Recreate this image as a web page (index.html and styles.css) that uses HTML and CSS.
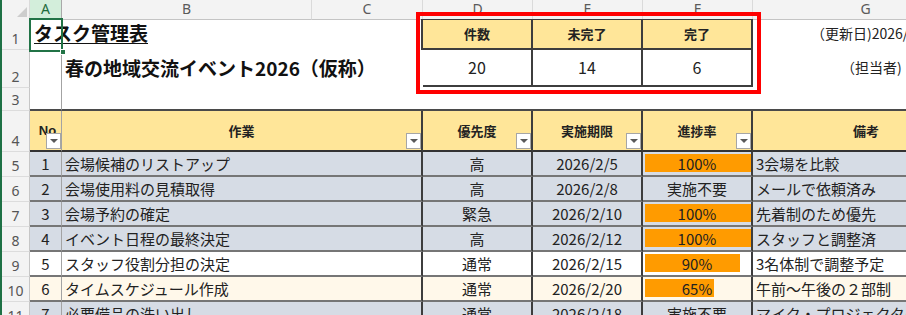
FILE: index.html
```html
<!DOCTYPE html>
<html lang="ja">
<head>
<meta charset="utf-8">
<link rel="stylesheet" href="styles.css">
</head>
<body>
<div class="sheet">
  <div class="row colhdr">
    <div class="corner"><span class="tri"></span></div>
    <div class="sel">A</div><div>B</div><div>C</div><div>D</div><div>E</div><div>F</div><div>G</div>
  </div>

  <div class="row r1">
    <div class="rh">1</div>
    <div class="ca"><span class="title">タスク管理表</span></div>
    <div></div>
    <div class="cc"></div>
    <div class="sh">件数</div><div class="sh">未完了</div><div class="sh">完了</div>
    <div class="meta m1">（更新日)2026/2/1</div>
  </div>

  <div class="row r2">
    <div class="rh">2</div>
    <div class="ca"></div>
    <div class="sub span2">春の地域交流イベント2026（仮称）</div>
    <div class="sv">20</div><div class="sv">14</div><div class="sv">6</div>
    <div class="meta m2">（担当者)</div>
  </div>

  <div class="row r3">
    <div class="rh">3</div>
    <div class="ca"></div><div></div><div></div><div></div><div></div><div></div><div></div>
  </div>

  <div class="row r4 th">
    <div class="rh">4</div>
    <div class="ca no">No<span class="fb"><span class="arr"></span></span></div>
    <div class="span2 tb">作業<span class="fb"><span class="arr"></span></span></div>
    <div class="tb">優先度<span class="fb"><span class="arr"></span></span></div>
    <div class="tb">実施期限<span class="fb"><span class="arr"></span></span></div>
    <div class="tb">進捗率<span class="fb"><span class="arr"></span></span></div>
    <div class="last">備考</div>
  </div>

  <div class="row td gray">
    <div class="rh">5</div>
    <div class="ca num">1</div>
    <div class="span2 tb task">会場候補のリストアップ</div>
    <div class="tb ctr">高</div>
    <div class="tb ctr">2026/2/5</div>
    <div class="tb prog"><div class="bar" style="--p:1"></div><div class="pv">100%</div></div>
    <div class="last note">3会場を比較</div>
  </div>

  <div class="row td gray">
    <div class="rh">6</div>
    <div class="ca num">2</div>
    <div class="span2 tb task">会場使用料の見積取得</div>
    <div class="tb ctr">高</div>
    <div class="tb ctr">2026/2/8</div>
    <div class="tb prog"><div class="pv">実施不要</div></div>
    <div class="last note">メールで依頼済み</div>
  </div>

  <div class="row td gray">
    <div class="rh">7</div>
    <div class="ca num">3</div>
    <div class="span2 tb task">会場予約の確定</div>
    <div class="tb ctr">緊急</div>
    <div class="tb ctr">2026/2/10</div>
    <div class="tb prog"><div class="bar" style="--p:1"></div><div class="pv">100%</div></div>
    <div class="last note">先着制のため優先</div>
  </div>

  <div class="row td gray">
    <div class="rh">8</div>
    <div class="ca num">4</div>
    <div class="span2 tb task">イベント日程の最終決定</div>
    <div class="tb ctr">高</div>
    <div class="tb ctr">2026/2/12</div>
    <div class="tb prog"><div class="bar" style="--p:1"></div><div class="pv">100%</div></div>
    <div class="last note">スタッフと調整済</div>
  </div>

  <div class="row td white">
    <div class="rh">9</div>
    <div class="ca num">5</div>
    <div class="span2 tb task">スタッフ役割分担の決定</div>
    <div class="tb ctr">通常</div>
    <div class="tb ctr">2026/2/15</div>
    <div class="tb prog"><div class="bar" style="--p:0.9"></div><div class="pv">90%</div></div>
    <div class="last note">3名体制で調整予定</div>
  </div>

  <div class="row td cream">
    <div class="rh">10</div>
    <div class="ca num">6</div>
    <div class="span2 tb task">タイムスケジュール作成</div>
    <div class="tb ctr">通常</div>
    <div class="tb ctr">2026/2/20</div>
    <div class="tb prog"><div class="bar" style="--p:0.65"></div><div class="pv">65%</div></div>
    <div class="last note">午前～午後の２部制</div>
  </div>

  <div class="row td gray">
    <div class="rh">11</div>
    <div class="ca num">7</div>
    <div class="span2 tb task">必要備品の洗い出し</div>
    <div class="tb ctr">通常</div>
    <div class="tb ctr">2026/2/18</div>
    <div class="tb prog"><div class="pv">実施不要</div></div>
    <div class="last note">マイク・プロジェクター</div>
  </div>

  <div class="selbox"><span class="handle"></span></div>
  <div class="redbox"></div>
</div>
</body>
</html>
```

FILE: styles.css
```css
* { box-sizing: border-box; margin: 0; padding: 0; }

body {
  width: 906px;
  height: 315px;
  overflow: hidden;
  background: #fff;
  font-family: "Noto Sans CJK JP", "Noto Sans", sans-serif;
  color: #1f1f1f;
}

.sheet {
  position: relative;
  height: 315px;
  border-left: 2px solid #1e7145;
}

.row {
  display: grid;
  grid-template-columns: 28px 32px 250px 111px 110px 110px 110px 226px;
}

.row > div { min-width: 0; white-space: nowrap; }

.span2 { grid-column: span 2; }

/* column header */
.colhdr { height: 19px; background: #f3f3f3; }
.colhdr > div {
  border-bottom: 1px solid #c4c4c4;
  border-right: 1px solid #dadada;
  font: 14px "Noto Sans", sans-serif;
  color: #5a5a5a;
  text-align: center;
  line-height: 18px;
}
.colhdr .sel {
  background: #d3eedb;
  color: #1e6b3b;
  border-bottom: 2px solid #217346;
  border-right: 1px solid #a9a9a9;
}
.corner {
  display: flex;
  justify-content: flex-end;
  align-items: flex-end;
  padding: 0 2px 2px 0;
}
.tri {
  width: 0; height: 0;
  border-left: 10px solid transparent;
  border-bottom: 10px solid #cdcdcd;
}

/* row headers */
.rh {
  background: #f3f3f3;
  border-right: 1px solid #c6c6c6;
  border-bottom: 1px solid #dcdcdc;
  display: flex;
  justify-content: center;
  align-items: flex-end;
  padding-bottom: 1px;
  font: 14px "Noto Sans", sans-serif;
  color: #555;
  line-height: 18px;
}

/* freeze line after column A */
.ca { border-right: 1px solid #a3a3a3; }

.r1 { height: 31px; }
.r2 { height: 38px; }
.r3 { height: 23px; }
.r4 { height: 41px; }
.td { height: 25px; }

.title {
  display: inline-block;
  padding-left: 4px;
  font-size: 19px;
  font-weight: bold;
  line-height: 28px;
  text-decoration: underline;
  text-decoration-thickness: 1px;
  text-underline-offset: 2px;
  color: #111;
}

.sub {
  padding-left: 3px;
  font-size: 19px;
  font-weight: bold;
  line-height: 36px;
  color: #111;
}

.cc { border-right: 2px solid #3d3d3d; }

.sh {
  background: #ffe699;
  border-top: 1px solid #3d3d3d;
  border-right: 2px solid #3d3d3d;
  border-bottom: 2px solid #3d3d3d;
  text-align: center;
  font-size: 13px;
  font-weight: bold;
  line-height: 28px;
  color: #222;
}
.sv {
  border-right: 2px solid #3d3d3d;
  border-bottom: 2px solid #3d3d3d;
  text-align: center;
  font-size: 16px;
  line-height: 34px;
  color: #222;
}
.r2 .sv { height: 37px; }

.meta { font-size: 14px; color: #222; }
.m1 { padding-left: 58px; line-height: 28px; }
.m2 { padding-left: 88px; line-height: 34px; }

.r3 > div:not(.rh) { border-bottom: 2px solid #4a4a4a; }

/* table header */
.th > div:not(.rh) {
  position: relative;
  background: #ffe699;
  border-bottom: 2px solid #333;
  text-align: center;
  font-size: 13px;
  font-weight: bold;
  line-height: 39px;
  color: #222;
}
.th .tb { border-right: 2px solid #3d3d3d; }
.th .no {
  text-align: left;
  padding-left: 4px;
  font-family: "Liberation Sans", sans-serif;
  font-size: 14px;
  line-height: 41px;
}

.fb {
  position: absolute;
  right: 0;
  bottom: 1px;
  width: 15px;
  height: 16px;
  background: #fff;
  border: 1px solid #a6a6a6;
  display: flex;
  justify-content: center;
  align-items: center;
}
.arr {
  width: 0; height: 0;
  border-left: 4px solid transparent;
  border-right: 4px solid transparent;
  border-top: 4px solid #595959;
}

/* table data */
.td > div:not(.rh) {
  border-bottom: 2px solid #767676;
  font-size: 15px;
  line-height: 23px;
  color: #222;
}
.td .tb { border-right: 2px solid #3d3d3d; }
.gray > div:not(.rh) { background: #d6dce5; }
.white > div:not(.rh) { background: #ffffff; }
.cream > div:not(.rh) { background: #fff8ea; }

.num, .ctr { text-align: center; }
.task { padding-left: 3px; }
.note { padding-left: 3px; }

.prog {
  display: grid;
  grid-template-columns: 100%;
}
.prog > * { grid-area: 1 / 1; }
.bar {
  margin: 2px 0 3px 2px;
  width: calc(var(--p) * (100% - 2px));
  background: #ff9b00;
}
.pv { text-align: center; line-height: 23px; }

/* overlays */
.selbox {
  position: absolute;
  left: 27px;
  top: 18px;
  width: 34px;
  height: 34px;
  border: 2px solid #217346;
}
.handle {
  position: absolute;
  right: -5px;
  bottom: -5px;
  width: 6px;
  height: 6px;
  background: #217346;
  border: 1px solid #fff;
}
.redbox {
  position: absolute;
  left: 414px;
  top: 12px;
  width: 345px;
  height: 82px;
  border: 4px solid #ff0000;
}
```
